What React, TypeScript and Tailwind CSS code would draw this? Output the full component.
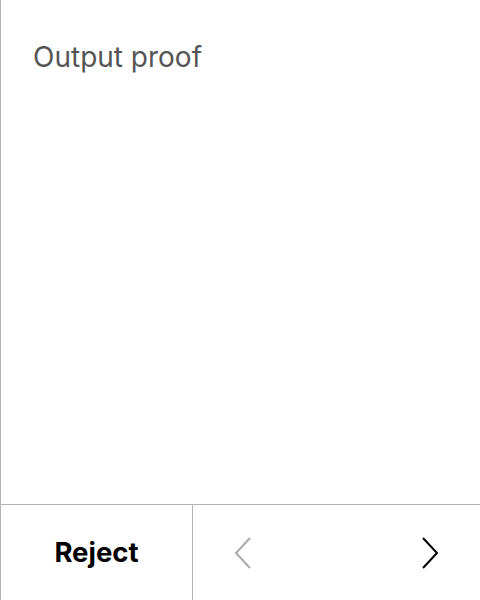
export default function App() {
  return (
    <main className="h-[600px] w-[480px] flex flex-col bg-white border-l border-[#b3b3b3] font-['Inter',sans-serif]">
      <section className="flex-1 px-8 pt-[39px]">
        <h1 className="text-[28px] leading-[36px] text-[#555]">Output proof</h1>
      </section>

      {/* Bottom action bar */}
      <footer className="h-[96px] flex border-t border-[#b3b3b3]">
        <button className="w-[191px] flex items-center justify-center text-[27.5px] font-bold text-black">
          Reject
        </button>
        <div className="flex-1 flex items-center justify-between border-l border-[#b3b3b3] pl-[41px] pr-[41px]">
          <svg width="18" height="32" viewBox="0 0 18 32" fill="none">
            <path d="M16 1 L2 16 L16 31" stroke="#aaa" strokeWidth="2" />
          </svg>
          <svg width="18" height="32" viewBox="0 0 18 32" fill="none">
            <path d="M2 1 L16 16 L2 31" stroke="#000" strokeWidth="2" />
          </svg>
        </div>
      </footer>
    </main>
  );
}
